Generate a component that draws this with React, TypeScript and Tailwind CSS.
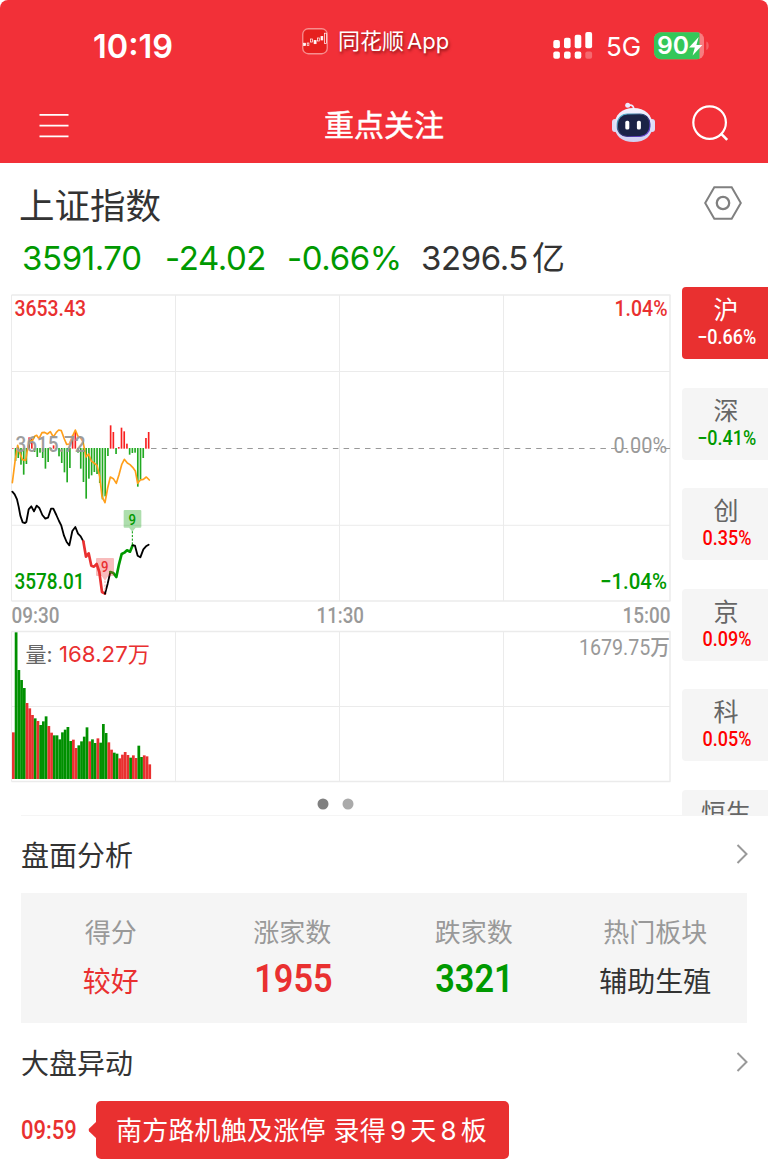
import React from "react";

const UP = "#e93030";
const DOWN = "#009900";

const tabs = [
  { name: "沪", change: "−0.66%", tone: "text-white", active: true },
  { name: "深", change: "−0.41%", tone: "text-[#009900]" },
  { name: "创", change: "0.35%", tone: "text-[#ff0000]" },
  { name: "京", change: "0.09%", tone: "text-[#ff0000]" },
  { name: "科", change: "0.05%", tone: "text-[#ff0000]" },
  { name: "恒生", change: "", tone: "text-[#ff0000]" },
];

const stats = [
  { label: "得分", value: "较好", tone: "text-[#e93030]" },
  { label: "涨家数", value: "1955", tone: "text-[#e93030]", number: true },
  { label: "跌家数", value: "3321", tone: "text-[#009900]", number: true },
  { label: "热门板块", value: "辅助生殖", tone: "text-[#333333]" },
];

// one entry per minute, in thirds of a pixel; negative values point up
const momentum = [
  -2, 39, 30, 50, 80, 48, -34, -30, 12, 27, 14, 30, 62, 42, 3, -10, 2, 25, 45, 73, 103, 60, -40, -50, 14, 62, 102,
  152, 92, 82, 72, 78, 105, 154, 145, 24, -70, -50, 18, -5, -63, -52, -15, 20, 15, 14, 116, 95, 30, -32, -50,
];

const volume = [
  140, 440, 327, 297, 273, 228, 212, 192, 182, 174, 162, 173, 188, 159, 139, 131, 131, 119, 140, 148, 156, 114, 118,
  93, 101, 113, 127, 155, 113, 119, 108, 122, 109, 165, 138, 110, 88, 79, 76, 62, 73, 81, 72, 64, 71, 63, 100, 66, 71,
  68, 44,
];
const volumeSide = "rggggrrrgrgggrrgggggggrrggggrggrgggrrggrrrrgrrggrrr";

const averageLine =
  "M37 248 L45 185 L53 136 L59 158 L67 179 L77 181 L84 138 L92 122 L98 121 L104 109 L110 106 L117 116 L126 98 L134 97 L142 102 L151 95 L160 111 L169 97 L176 90 L184 92 L193 117 L200 133 L208 132 L217 110 L226 90 L234 109 L241 112 L249 125 L258 171 L266 162 L274 183 L282 189 L291 196 L299 229 L306 290 L315 308 L323 264 L331 231 L340 236 L349 250 L357 224 L365 194 L373 178 L382 189 L390 194 L398 202 L406 213 L413 250 L421 240 L430 238 L439 231 L448 240";

const FONT_DIN = "Roboto, 'Noto Sans CJK SC', sans-serif";

type LabelProps = {
  x: number;
  y: number;
  width: number;
  fill: string;
  size?: number;
  weight?: number;
  children: string;
};

function Label({ x, y, width, fill, size = 22, weight = 500, children }: LabelProps) {
  return (
    <text
      x={x}
      y={y}
      fill={fill}
      fontSize={size}
      fontWeight={weight}
      fontFamily={FONT_DIN}
      textLength={width}
      lengthAdjust="spacingAndGlyphs"
    >
      {children}
    </text>
  );
}

function StatusBar() {
  return (
    <div className="flex h-[92px] items-center text-white">
      <div className="ml-[93px] mt-[2px] w-[209px] font-[Inter] text-[32.5px] font-semibold leading-none">10:19</div>
      <div className="mb-[10px] flex w-[251px] items-center">
        <svg width="26" height="27" viewBox="0 0 26 27">
          <rect x="0.75" y="0.75" width="24.5" height="25" rx="5.5" fill="#e6201f" stroke="#f78e8f" strokeWidth="1.3" />
          <g stroke="#fff" strokeWidth="0.7">
            <rect x="1.6" y="15.2" width="2" height="2.4" fill="#fff" />
            <rect x="5.2" y="15" width="1.7" height="2.6" fill="none" />
            <rect x="8.6" y="11" width="1.9" height="3" fill="none" />
            <rect x="12.1" y="12.5" width="2" height="3.2" fill="#fff" />
            <rect x="15.6" y="10" width="1.7" height="3" fill="none" />
            <rect x="19" y="8.500" width="1.8" height="3.5" fill="#fff" />
            <rect x="22.6" y="5.2" width="2" height="10.3" fill="none" />
          </g>
        </svg>
        <span className="ml-[10px] whitespace-nowrap font-[Inter,'Noto_Sans_CJK_SC',sans-serif] text-[22px] leading-none [text-shadow:1px_2px_3px_rgba(70,0,0,0.6)]">
          同花顺<span className="ml-[3px]">App</span>
        </span>
      </div>
      <svg className="-mt-[2px]" width="40" height="27" viewBox="0 0 40 27" fill="#fff">
        <rect x="0.3" y="8" width="6.6" height="8.2" rx="2" />
        <rect x="11" y="5.8" width="6.6" height="10.4" rx="2" />
        <rect x="21.7" y="2.8" width="6.6" height="13.4" rx="2" />
        <rect x="32.3" y="0" width="6.8" height="16.2" rx="2" />
        <rect x="0.3" y="19.6" width="6.6" height="7.2" rx="2" />
        <rect x="11" y="19.6" width="6.6" height="7.2" rx="2" />
        <rect x="21.7" y="19.6" width="6.6" height="7.2" rx="2" />
        <rect x="32.3" y="19.6" width="6.8" height="7.2" rx="2" opacity=".28" />
      </svg>
      <span className="ml-[13px] mt-[2px] w-[48px] font-[Inter] text-[26px] leading-none">5G</span>
      <svg className="-mt-[1px]" width="57" height="28" viewBox="0 0 57 28">
        <defs>
          <clipPath id="battery">
            <rect x="0" y="0.3" width="50" height="27" rx="7" />
          </clipPath>
        </defs>
        <g clipPath="url(#battery)">
          <rect width="50" height="28" fill="#f77c80" />
          <rect width="45.5" height="28" fill="#34c759" />
        </g>
        <path d="M52.3 9.5c3.2.8 3.2 7.7 0 8.5z" fill="#f56066" />
        <text x="3" y="22.300" fill="#fff" fontFamily="Inter" fontSize="24" fontWeight="600" textLength="32" lengthAdjust="spacingAndGlyphs">
          90
        </text>
        <path d="M44.7 5 35 15.500h5.800l-2.200 8L48.400 13h-6z" fill="#fff" />
      </svg>
    </div>
  );
}

function RobotIcon() {
  return (
    <svg width="44" height="42" viewBox="0 0 44 42">
      <defs>
        <linearGradient id="shell" x1="0" y1="0" x2="0" y2="1">
          <stop offset="0" stopColor="#f4f3ff" />
          <stop offset="1" stopColor="#cfd0f1" />
        </linearGradient>
        <linearGradient id="rim" x1="0" y1="0" x2="1" y2="1">
          <stop offset="0" stopColor="#5fd3e8" />
          <stop offset=".5" stopColor="#272a60" />
          <stop offset="1" stopColor="#7a4df0" />
        </linearGradient>
      </defs>
      <path d="M16.500 3.500c3.500-1 5.500.5 5.500 5" fill="none" stroke="#eceaff" strokeWidth="1.800" />
      <circle cx="15.700" cy="3.200" r="2.500" fill="#eceaff" />
      <rect x="0" y="17" width="6" height="13" rx="3" fill="#dcdcf7" />
      <rect x="37" y="17" width="6" height="13" rx="3" fill="#dcdcf7" />
      <path d="M21.500 6C33 6 40.500 13 40.500 23.500S33 40 21.500 40 2.500 34 2.500 23.500 10 6 21.500 6z" fill="url(#shell)" />
      <rect x="5.300" y="12" width="32.600" height="22.500" rx="10" fill="#1b2346" stroke="url(#rim)" strokeWidth="1.200" />
      <rect x="13.300" y="18.800" width="4" height="8.800" rx="1.600" fill="#fff" />
      <rect x="24.900" y="18.800" width="4" height="8.800" rx="1.600" fill="#fff" />
    </svg>
  );
}

function NavBar() {
  return (
    <div className="flex h-[71px] items-start">
      <svg className="ml-[39px] mt-[21px]" width="31" height="26" viewBox="0 0 31 26">
        <path d="M.5 1.800h29M.5 12.600h29M.5 23.300h29" stroke="#fff" strokeWidth="1.800" />
      </svg>
      <h1 className="ml-[254px] mt-[16px] w-[288px] font-['Noto_Sans_CJK_SC',sans-serif] text-[30px] font-normal leading-none text-white [-webkit-text-stroke:0.5px_white]">
        重点关注
      </h1>
      <div className="mt-[10px]">
        <RobotIcon />
      </div>
      <svg className="ml-[34px] mt-[11px]" width="42" height="42" viewBox="0 0 42 42" fill="none" stroke="#fff">
        <circle cx="19.600" cy="19.600" r="16.300" strokeWidth="2.200" />
        <path d="m30.800 30.300 6.400 6.500" strokeWidth="2.600" />
      </svg>
    </div>
  );
}

function Chart() {
  return (
    <svg width="682" height="528" viewBox="0 287 682 528">
      <g fill="none" stroke="#ebebeb">
        <path d="M11.500 295H670.500M11.500 601H670.500M11.500 631.500H670.500M11.500 781.500H670.500" strokeWidth="1.300" />
        <path d="M11.500 295V601M11.500 631.500V781.500" strokeWidth="1" />
        <path d="M670 295V601M670 631.500V781.500" strokeWidth="1.500" />
        <path d="M175.500 295V601M339.500 295V601M503.500 295V601M175.500 631V781M339.500 631V781M503.500 631V781" />
        <path d="M11.500 371.500H670M11.500 525.300H670M11.500 706.500H670" />
      </g>
      <path d="M151 448.500H670" stroke="#999" strokeWidth="1.100" strokeDasharray="5.500 5.200" />

      <Label x={613.5} y={452.500} width={53.500} fill="#999" weight={450}>0.00%</Label>
      <Label x={14.5} y={315.500} width={71.500} fill={UP}>3653.43</Label>
      <Label x={614.5} y={315.500} width={53} fill={UP}>1.04%</Label>
      <Label x={14.5} y={589} width={70} fill={DOWN}>3578.01</Label>
      <Label x={600} y={589} width={67} fill={DOWN}>−1.04%</Label>
      <Label x={11.5} y={623} width={48} fill="#999" weight={500}>09:30</Label>
      <Label x={316.5} y={623} width={47.500} fill="#999" weight={500}>11:30</Label>
      <Label x={622.5} y={623} width={48} fill="#999" weight={500}>15:00</Label>
      <Label x={579} y={655} width={91} fill="#999" weight={450}>1679.75万</Label>

      {/* intraday momentum, average and price */}
      <g transform="translate(0 400) scale(.33333)" fill="none" strokeLinejoin="round" strokeLinecap="round">
        {momentum.map((h, i) => (
          <rect
            key={i}
            x={36 + i * 8.150}
            y={h < 0 ? 146 + h : 144}
            width="5"
            height={Math.abs(h)}
            fill={h < 0 ? "#f92020" : "#22aa22"}
          />
        ))}
        <path d={averageLine} stroke="#ff9f1a" strokeWidth="5" />
        <path
          d="M37 275L44 283L51 298L56 320L61 347L68 367L75 369L79 366L86 328L94 319L102 334L110 317L118 324L127 345L136 356L144 353L153 326L160 326L169 345L177 363L184 377L192 407L200 426L208 436L217 393L226 381L234 401L242 409L250 424"
          stroke="#000"
          strokeWidth="5.500"
        />
        <path d="M250 424L258 470L266 460L274 497L282 500L290 492L298 516L306 576L315 581" stroke={UP} strokeWidth="8" />
        <path d="M315 581L323 551L331 516" stroke="#000" strokeWidth="5.500" />
        <path d="M331 516L340 519L349 531L357 493L365 462L373 458L381 451L390 455L398 436" stroke={DOWN} strokeWidth="8" />
        <path d="M398 436L405 437L413 467L421 472L430 448L438 439L446 434" stroke="#000" strokeWidth="5.500" />

        <path d="M397 395V436" stroke={DOWN} strokeWidth="3" strokeDasharray="4 7" />
        <path d="M374 330H421Q424 330 424 333V380Q424 383 421 383H407L397 395L387 383H374Q371 383 371 380V333Q371 330 374 330Z" fill="#009900" fillOpacity=".32" />
        <path d="M291 474H339Q342 474 342 477V525Q342 528 339 528H325L315 542L305 528H291Q288 528 288 525V477Q288 474 291 474Z" fill="#e93030" fillOpacity=".32" />
        <path d="M315 544V575" stroke="#f5a4a4" strokeWidth="3" strokeDasharray="4 7" />
      </g>
      <Label x={128.5} y={524.500} width={7.500} size={15} fill={DOWN}>9</Label>
      <Label x={101} y={572} width={7.500} size={15} fill={UP}>9</Label>
      <g opacity=".95">
        <Label x={15.5} y={452} width={70} fill="#999" weight={500}>3615.72</Label>
      </g>

      <g transform="translate(0 620) scale(.33333)">
        {volume.map((h, i) => (
          <rect
            key={i}
            x={36 + i * 8.180}
            y={477 - h}
            width="8.3"
            height={h}
            fill={volumeSide[i] === "r" ? UP : "#009000"}
            stroke="#fff"
            strokeWidth=".6"
            strokeOpacity=".15"
          />
        ))}
      </g>
      <g fontFamily="Inter, 'Noto Sans CJK SC', sans-serif" fontSize="22">
        <text x="25.500" y="662" fill="#666" fontSize="21">量:</text>
        <text x="59" y="662" fill={UP} textLength="91" lengthAdjust="spacingAndGlyphs">168.27万</text>
      </g>

      <circle cx="323" cy="804" r="5.500" fill="#808080" />
      <circle cx="348" cy="804" r="5.500" fill="#aaa" />
    </svg>
  );
}

function MarketTabs() {
  return (
    <div className="flex h-[528px] w-[86px] flex-col gap-[28.5px] overflow-hidden pt-[0.400px]">
      {tabs.map((tab) => (
        <div
          key={tab.name}
          className={`flex h-[72px] shrink-0 flex-col items-center rounded-l pl-[2px] pt-[9px] ${
            tab.active ? "bg-[#e93030] text-white" : "bg-[#f5f5f5] text-[#666666]"
          }`}
        >
          <span className="font-['Noto_Sans_CJK_SC',sans-serif] text-[25px] leading-[25px]">{tab.name}</span>
          <span className={`mt-[6px] scale-x-[0.9] whitespace-nowrap pl-[2px] font-[Roboto] text-[20px] font-medium leading-[20px] ${tab.tone}`}>
            {tab.change}
          </span>
        </div>
      ))}
    </div>
  );
}

function SectionTitle({ children }: { children: string }) {
  return (
    <div className="flex items-center justify-between pl-[21px] pr-[20px]">
      <h2 className="font-['Noto_Sans_CJK_SC',sans-serif] text-[28px] leading-[28px] text-[#333333]">{children}</h2>
      <svg width="12" height="20" viewBox="0 0 12 20" fill="none" stroke="#999" strokeWidth="2">
        <path d="m1.500 1 9 9-9 9" />
      </svg>
    </div>
  );
}

export default function App() {
  return (
    <div className="flex h-[1175px] w-[768px] flex-col overflow-hidden bg-white font-['Noto_Sans_CJK_SC',sans-serif]">
      <header className="h-[163px] shrink-0 rounded-t-lg bg-[#f23038]">
        <StatusBar />
        <NavBar />
      </header>

      <section className="h-[124px] shrink-0">
        <div className="flex items-start justify-between pl-[19px] pr-[26px] pt-[23px]">
          <h2 className="text-[35.5px] leading-[36px] text-[#333333]">上证指数</h2>
          <svg width="38" height="34" viewBox="0 0 38 34" fill="none" stroke="#808080" strokeWidth="2">
            <path d="M1.200 17 10.300 1.300h17.400L36.800 17l-9.100 15.700H10.300z" />
            <circle cx="19" cy="17" r="6.200" strokeWidth="2.300" />
          </svg>
        </div>
        <div className="mt-[18px] flex h-[36px] items-center whitespace-nowrap pl-[22px] font-[Inter,'Noto_Sans_CJK_SC',sans-serif] text-[33px] leading-none tracking-[-0.4px] text-[#009900]">
          <span className="w-[143px]">3591.70</span>
          <span className="w-[122px]">-24.02</span>
          <span className="w-[134px]">-0.66%</span>
          <span className="text-[#333333]">3296.5<span className="ml-[4px]">亿</span></span>
        </div>
      </section>

      <section className="flex h-[528px] shrink-0">
        <Chart />
        <MarketTabs />
      </section>

      <section className="ml-[21px] shrink-0 border-t border-[#f5f5f5]" />

      <section className="mt-[24px] shrink-0">
        <SectionTitle>盘面分析</SectionTitle>
        <div className="mx-[21px] mt-[25px] grid h-[130px] grid-cols-4 bg-[#f5f5f5] pt-[25px] text-center">
          {stats.map((stat) => (
            <div key={stat.label} className="flex flex-col items-center pr-[2px]">
              <span className="text-[26px] leading-[26px] text-[#999999]">{stat.label}</span>
              {stat.number ? (
                <span className={`mt-[15px] scale-x-[0.88] pl-[2px] font-[Roboto] text-[39px] font-semibold leading-[40px] ${stat.tone}`}>
                  {stat.value}
                </span>
              ) : (
                <span className={`mt-[22px] text-[28px] leading-[28px] ${stat.tone}`}>{stat.value}</span>
              )}
            </div>
          ))}
        </div>
      </section>

      <section className="mt-[25px] shrink-0">
        <SectionTitle>大盘异动</SectionTitle>
        <div className="mt-[25px] flex items-center pl-[21px]">
          <span className="w-[67px] origin-left scale-x-[0.88] whitespace-nowrap font-[Roboto] text-[25px] font-medium leading-none text-[#e93030]">
            09:59
          </span>
          <svg width="8" height="18" viewBox="0 0 8 18" fill="#e93030">
            <path d="M8 1 1.200 7.600q-1.200 1.400 0 2.800L8 17z" />
          </svg>
          <div className="flex h-[58px] w-[413px] items-center whitespace-nowrap rounded-[5px] bg-[#e93030] pl-[20px] pt-[2px] font-[Inter,'Noto_Sans_CJK_SC',sans-serif] text-[26px] leading-none tracking-[0.2px] text-white">
            <span>南方路机触及涨停</span>
            <span className="ml-[8px]">录得</span>
            <span className="mx-[4px]">9</span>
            <span>天</span>
            <span className="mx-[4px]">8</span>
            <span>板</span>
          </div>
        </div>
      </section>
    </div>
  );
}
